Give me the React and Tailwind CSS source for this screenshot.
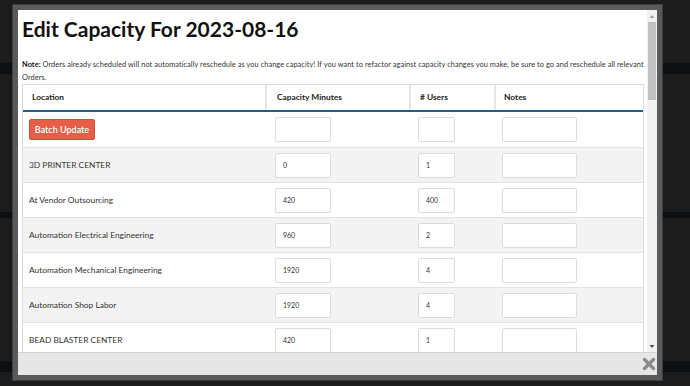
import React from "react";

const rows = [
  { name: "3D PRINTER CENTER", cap: "0", users: "1" },
  { name: "At Vendor Outsourcing", cap: "420", users: "400" },
  { name: "Automation Electrical Engineering", cap: "960", users: "2" },
  { name: "Automation Mechanical Engineering", cap: "1920", users: "4" },
  { name: "Automation Shop Labor", cap: "1920", users: "4" },
  { name: "BEAD BLASTER CENTER", cap: "420", users: "1" },
];

function Field({ value, w }) {
  return (
    <div
      className={`${w} flex h-[25px] items-center rounded-[2px] border border-[#dcdcdc] bg-white pl-[7px] text-[7px] text-[#333]`}
    >
      {value}
    </div>
  );
}

export default function App() {
  return (
    <div
      className="relative h-[386px] w-[690px] overflow-hidden bg-[#1c1c1c]"
      style={{ fontFamily: "Lato, 'Noto Sans', sans-serif" }}
    >
      {/* page behind the backdrop */}
      <div className="flex flex-col">
        <div className="h-[63px]" />
        <div className="h-[11px] bg-[#0d1013]" />
        <div className="h-[138px]" />
        <div className="h-[6px] bg-[#0d1013]" />
        <div className="h-[143px]" />
        <div className="h-[11px] bg-[#0d1013]" />
      </div>

      {/* modal */}
      <div className="absolute left-[12px] top-[4px] h-[377px] w-[651px] border border-[#3c3c3c] bg-[#5a5a5a] p-[5px]">
        <div className="flex h-full flex-col bg-white">
          <div className="flex min-h-0 flex-1">
            <div className="min-w-0 flex-1 overflow-hidden pl-[4px]">
              <h1 className="mt-[2px] h-[34px] text-[21px] font-bold leading-[34px] text-[#111]">
                Edit Capacity For 2023-08-16
              </h1>
              <p className="mt-[13px] text-[7.4px] leading-[12.5px] tracking-[0.06px] text-[#333]">
                <span className="whitespace-nowrap">
                  <b className="text-[#111]">Note:</b> Orders already scheduled will not automatically reschedule as
                  you change capacity! If you want to refactor against capacity changes you make, be sure to go and
                  reschedule all relevant
                </span>
                <br />
                <span>Orders.</span>
              </p>
              <div className="w-[622px] border-x border-t border-[#dddddd] text-[8.4px] text-[#333]">
                <div className="grid h-[27px] grid-cols-[244px_144px_85px_149px] border-b-2 border-[#245d8c] font-bold text-[#222]">
                  <div className="flex items-center border-r-2 border-[#e6e6e6] pl-[9px]">Location</div>
                  <div className="flex items-center border-r-2 border-[#e6e6e6] pl-[10px]">Capacity Minutes</div>
                  <div className="flex items-center border-r-2 border-[#e6e6e6] pl-[9px]"># Users</div>
                  <div className="flex items-center pl-[8px]">Notes</div>
                </div>
                <div className="grid h-[35px] grid-cols-[244px_144px_85px_149px] bg-white">
                  <div className="flex items-center pl-[6px]">
                    <button className="h-[21px] w-[66px] rounded-[2px] border border-[#cf4d36] bg-[#e65e47] text-[9px] font-semibold text-white">
                      Batch Update
                    </button>
                  </div>
                  <div className="flex items-center pl-[8px]">
                    <Field value="" w="w-[56px]" />
                  </div>
                  <div className="flex items-center pl-[7px]">
                    <Field value="" w="w-[37px]" />
                  </div>
                  <div className="flex items-center pl-[6px]">
                    <Field value="" w="w-[75px]" />
                  </div>
                </div>
                {rows.map((r, i) => (
                  <div
                    key={r.name}
                    className={`grid h-[35px] grid-cols-[244px_144px_85px_149px] border-t border-[#e2e2e2] ${
                      i % 2 === 0 ? "bg-[#f3f3f3]" : "bg-white"
                    }`}
                  >
                    <div className="flex items-center pl-[6px]">{r.name}</div>
                    <div className="flex items-center pl-[8px]">
                      <Field value={r.cap} w="w-[56px]" />
                    </div>
                    <div className="flex items-center pl-[7px]">
                      <Field value={r.users} w="w-[37px]" />
                    </div>
                    <div className="flex items-center pl-[6px]">
                      <Field value="" w="w-[75px]" />
                    </div>
                  </div>
                ))}
              </div>
            </div>
            {/* scrollbar */}
            <div className="flex w-[10px] flex-col items-center bg-[#f1f1f1]">
              <svg width="10" height="12" viewBox="0 0 10 12" className="shrink-0">
                <path d="M2.5 8 L5 5 L7.5 8 Z" fill="#a3a3a3" />
              </svg>
              <div className="h-[78px] w-[8px] bg-[#c1c1c1]" />
              <div className="flex-1" />
              <svg width="10" height="12" viewBox="0 0 10 12" className="shrink-0">
                <path d="M2.5 5 L5 8 L7.5 5 Z" fill="#505050" />
              </svg>
            </div>
          </div>
          <div className="flex h-[23px] shrink-0 items-center justify-end border-t border-[#d2d2d2] bg-[#e6e6e6] pr-[1px]">
            <svg width="14" height="14" viewBox="0 0 14 14">
              <path d="M2.5 2.5 L11.5 11.5 M11.5 2.5 L2.5 11.5" stroke="#8a8a8a" strokeWidth="3.4" strokeLinecap="round" />
            </svg>
          </div>
        </div>
      </div>
    </div>
  );
}
